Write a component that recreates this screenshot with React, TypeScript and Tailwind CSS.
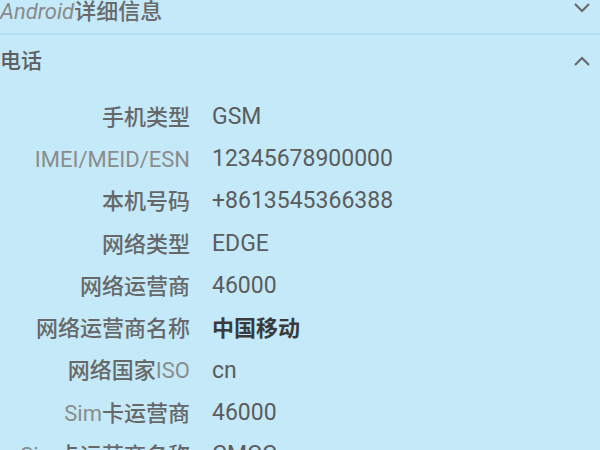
import React from "react";

const cjk = "font-medium text-[#686868]";
const lat = "font-normal text-[#8c8c8c]";

type Part = { t: string; c?: boolean };
const rows: { label: Part[]; value: string; bold?: boolean }[] = [
  { label: [{ t: "手机类型", c: true }], value: "GSM" },
  { label: [{ t: "IMEI/MEID/ESN" }], value: "12345678900000" },
  { label: [{ t: "本机号码", c: true }], value: "+8613545366388" },
  { label: [{ t: "网络类型", c: true }], value: "EDGE" },
  { label: [{ t: "网络运营商", c: true }], value: "46000" },
  { label: [{ t: "网络运营商名称", c: true }], value: "中国移动", bold: true },
  { label: [{ t: "网络国家", c: true }, { t: "ISO" }], value: "cn" },
  { label: [{ t: "Sim" }, { t: "卡运营商", c: true }], value: "46000" },
  { label: [{ t: "Sim" }, { t: "卡运营商名称", c: true }], value: "CMCC" },
];

function Chevron({ up }: { up?: boolean }) {
  return (
    <svg width="18" height="10" viewBox="0 0 18 10" className="block">
      <path
        d={up ? "M2 9 L9 2 L16 9" : "M2 1 L9 8 L16 1"}
        fill="none"
        stroke="#6a6a6a"
        strokeWidth="2.2"
      />
    </svg>
  );
}

export default function App() {
  return (
    <div
      className="w-[600px] h-[450px] overflow-hidden bg-[#c4e9f9]"
      style={{ fontFamily: "Roboto, 'Noto Sans CJK SC', sans-serif" }}
    >
      <div className="h-[35px] flex items-start justify-between border-b-2 border-[#b0e0f4]">
        <div className="text-[22px] leading-[24px]">
          <span className="italic text-[#8a8a8a]">Android</span>
          <span className="font-medium text-[#6a6a6a]">详细信息</span>
        </div>
        <div className="pt-[3px] pr-[9px]">
          <Chevron />
        </div>
      </div>
      <div className="h-[54px] flex items-center justify-between">
        <span className="text-[21px] font-medium text-[#5e5e5e]">电话</span>
        <div className="pr-[9px] pb-[2px]">
          <Chevron up />
        </div>
      </div>
      <div className="pt-[7px] grid grid-cols-[190px_1fr] gap-x-[22px] auto-rows-[42.3px] items-center text-[22px]">
        {rows.map((r, i) => (
          <React.Fragment key={i}>
            <div className="text-right whitespace-nowrap">
              {r.label.map((p, j) => (
                <span key={j} className={p.c ? cjk : lat}>
                  {p.t}
                </span>
              ))}
            </div>
            <div
              className={
                r.bold
                  ? "text-[22px] font-semibold text-[#3a3a3a]"
                  : "text-[23px] text-[#5c5c5c]"
              }
            >
              {r.value}
            </div>
          </React.Fragment>
        ))}
      </div>
    </div>
  );
}
